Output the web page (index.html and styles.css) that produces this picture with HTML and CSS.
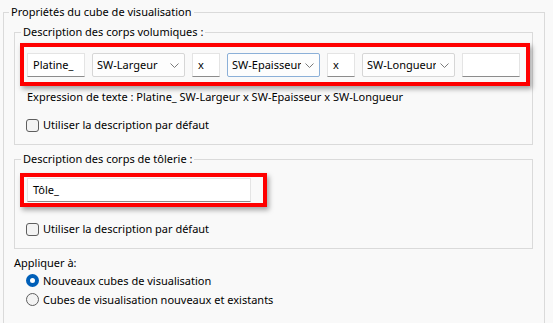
FILE: index.html
```html
<!DOCTYPE html>
<html lang="fr">
<head>
<meta charset="utf-8">
<link rel="stylesheet" href="styles.css">
</head>
<body>
<fieldset class="group outer">
  <legend class="legend outer-legend">Propriétés du cube de visualisation</legend>

  <fieldset class="group inner">
    <legend class="legend">Description des corps volumiques :</legend>
    <div class="mark mark-wide">
      <div class="field w58">Platine_</div>
      <div class="combo"><span class="combo-text">SW-Largeur</span><svg class="chev" width="9" height="5" viewBox="0 0 9 5"><polyline points="0.5,0.5 4.5,4.5 8.5,0.5" fill="none" stroke="#7a7a7a" stroke-width="1"/></svg></div>
      <div class="field w28">x</div>
      <div class="combo focus"><span class="combo-text">SW-Epaisseur</span><svg class="chev" width="9" height="5" viewBox="0 0 9 5"><polyline points="0.5,0.5 4.5,4.5 8.5,0.5" fill="none" stroke="#7a7a7a" stroke-width="1"/></svg></div>
      <div class="field w28">x</div>
      <div class="combo"><span class="combo-text">SW-Longueur</span><svg class="chev" width="9" height="5" viewBox="0 0 9 5"><polyline points="0.5,0.5 4.5,4.5 8.5,0.5" fill="none" stroke="#7a7a7a" stroke-width="1"/></svg></div>
      <div class="field w58"></div>
    </div>
    <div class="expr">Expression de texte : Platine_ SW-Largeur x SW-Epaisseur x SW-Longueur</div>
    <div class="check-row"><span class="checkbox"></span><span>Utiliser la description par défaut</span></div>
  </fieldset>

  <fieldset class="group inner second">
    <legend class="legend">Description des corps de tôlerie :</legend>
    <div class="mark mark-narrow">
      <div class="field w224">Tôle_</div>
    </div>
    <div class="check-row row2"><span class="checkbox"></span><span>Utiliser la description par défaut</span></div>
  </fieldset>

  <div class="apply">Appliquer à:</div>
  <div class="radio-row"><span class="radio checked"></span><span>Nouveaux cubes de visualisation</span></div>
  <div class="radio-row"><span class="radio"></span><span>Cubes de visualisation nouveaux et existants</span></div>
</fieldset>
</body>
</html>
```

FILE: styles.css
```css
html, body {
  margin: 0;
  padding: 0;
  background: #f9f9f9;
}
body {
  padding-top: 4px;
  font-family: "Noto Sans", "Segoe UI", sans-serif;
  font-size: 11px;
  line-height: 16px;
  color: #000;
  overflow: hidden;
  height: 323px;
  box-sizing: border-box;
}
.group {
  border: 1px solid #dadada;
  margin: 0;
  min-width: 0;
}
.outer {
  margin-left: 3px;
  width: 542px;
  box-sizing: border-box;
  padding: 4px 11px 60px 10px;
}
.legend {
  padding: 0 2px;
  line-height: 16px;
}
.outer-legend {
  margin-left: -5px;
}
.inner {
  padding: 3px 0 11px 5px;
}
.inner .legend {
  margin-left: 1px;
}
.second {
  margin-top: 6px;
}
.mark {
  border: 4px solid #ff0000;
  box-shadow: 2px 3px 5px rgba(0, 0, 0, 0.35);
  display: flex;
  box-sizing: border-box;
}
.mark-wide {
  width: 510px;
  padding: 6px 5px 5px 3px;
  gap: 7px;
}
.mark-narrow {
  width: 247px;
  padding: 1px 0 1px 3px;
  margin-top: 3px;
}
.field {
  height: 24px;
  box-sizing: border-box;
  background: #ffffff;
  border: 1px solid #e4e4e4;
  border-bottom-color: #8c8c8c;
  padding-left: 5px;
  display: flex;
  align-items: center;
}
.w58 { width: 58px; }
.w28 { width: 28px; }
.w224 { width: 224px; }
.combo {
  width: 93px;
  height: 24px;
  box-sizing: border-box;
  background: #fdfdfd;
  border: 1px solid #d6d6d6;
  border-radius: 2px;
  display: flex;
  align-items: center;
  padding-left: 4px;
  padding-right: 5px;
}
.combo.focus {
  border-color: #8cb0d8;
}
.combo-text {
  flex: 1;
  overflow: hidden;
  white-space: nowrap;
}
.chev {
  flex: none;
  margin-left: 4px;
}
.expr {
  margin-top: 3px;
  padding-left: 7px;
}
.check-row {
  display: flex;
  align-items: center;
  height: 16px;
  margin-top: 12px;
  padding-left: 6px;
}
.row2 {
  margin-top: 14px;
}
.checkbox {
  width: 13px;
  height: 13px;
  box-sizing: border-box;
  border: 1px solid #5e5e5e;
  border-radius: 3px;
  background: #f3f3f3;
  margin-right: 4px;
  flex: none;
}
.apply {
  margin-top: 6px;
}
.radio-row {
  display: flex;
  align-items: center;
  height: 19px;
  padding-left: 12px;
}
.radio {
  width: 13px;
  height: 13px;
  box-sizing: border-box;
  border-radius: 50%;
  border: 1px solid #5e5e5e;
  background: #f3f3f3;
  margin-right: 4px;
  flex: none;
}
.radio.checked {
  border: 4px solid #005fb8;
  background: #ffffff;
}
```
